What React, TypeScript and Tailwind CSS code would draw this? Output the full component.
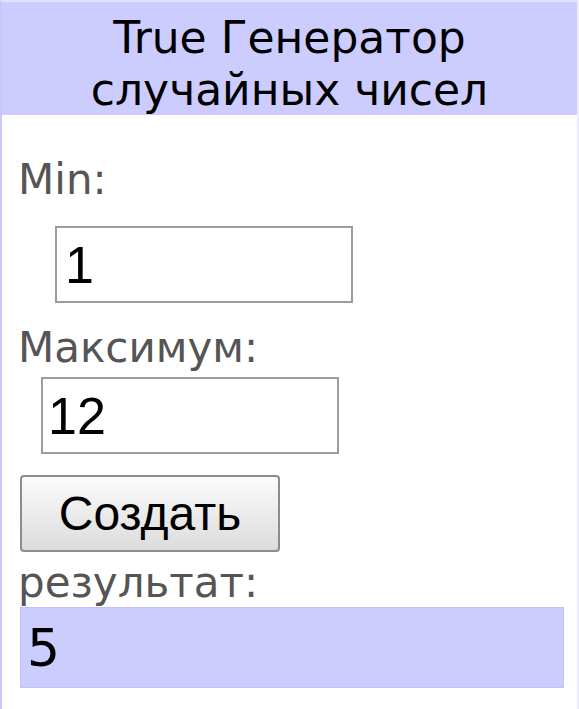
import React from "react";

export default function App() {
  return (
    <div className="w-[579px] h-[709px] bg-white overflow-hidden">
      <div className="flex flex-col w-full h-full border-t-2 border-t-[#e2e2ff] border-l-2 border-l-[#c8c8ff] border-r-2 border-r-[#ececff]">
        <div className="h-[113px] bg-[#ccccff] pt-[10px] text-center text-black text-[44px] leading-[52px] font-['DejaVu_Sans',Verdana,sans-serif]">
          <div>True Генератор</div>
          <div>случайных чисел</div>
        </div>
        <div className="flex flex-col items-start pl-[16px] pt-[41px]">
          <div className="h-[48px] text-[42px] leading-[48px] text-[#555555] font-['DejaVu_Sans',Verdana,sans-serif]">
            Min:
          </div>
          <input
            readOnly
            value="1"
            className="block mt-[22px] ml-[37px] w-[298px] h-[77px] border-2 border-[#9c9c9c] bg-white pl-[8px] text-[52px] text-black outline-none font-['Liberation_Sans',Arial,sans-serif]"
          />
          <div className="mt-[21px] h-[48px] text-[42px] leading-[48px] text-[#555555] font-['DejaVu_Sans',Verdana,sans-serif]">
            Максимум:
          </div>
          <input
            readOnly
            value="12"
            className="block mt-[5px] ml-[23px] w-[298px] h-[77px] border-2 border-[#9c9c9c] bg-white pl-[5px] text-[52px] text-black outline-none font-['Liberation_Sans',Arial,sans-serif]"
          />
          <button className="block mt-[21px] ml-[2px] w-[260px] h-[77px] rounded-[4px] border-2 border-[#8c8c8c] bg-gradient-to-b from-[#fbfbfb] to-[#dcdcdc] text-[48px] text-black font-['Liberation_Sans',Arial,sans-serif]">
            Создать
          </button>
          <div className="mt-[7px] h-[48px] text-[42px] leading-[48px] text-[#555555] font-['DejaVu_Sans',Verdana,sans-serif]">
            результат:
          </div>
          <div className="mt-0 ml-[2px] w-[544px] h-[81px] bg-[#ccccff] border border-[#c0c0ff] pl-[6px] flex items-center text-[52px] text-black font-['DejaVu_Sans',Verdana,sans-serif]">
            5
          </div>
        </div>
      </div>
    </div>
  );
}
